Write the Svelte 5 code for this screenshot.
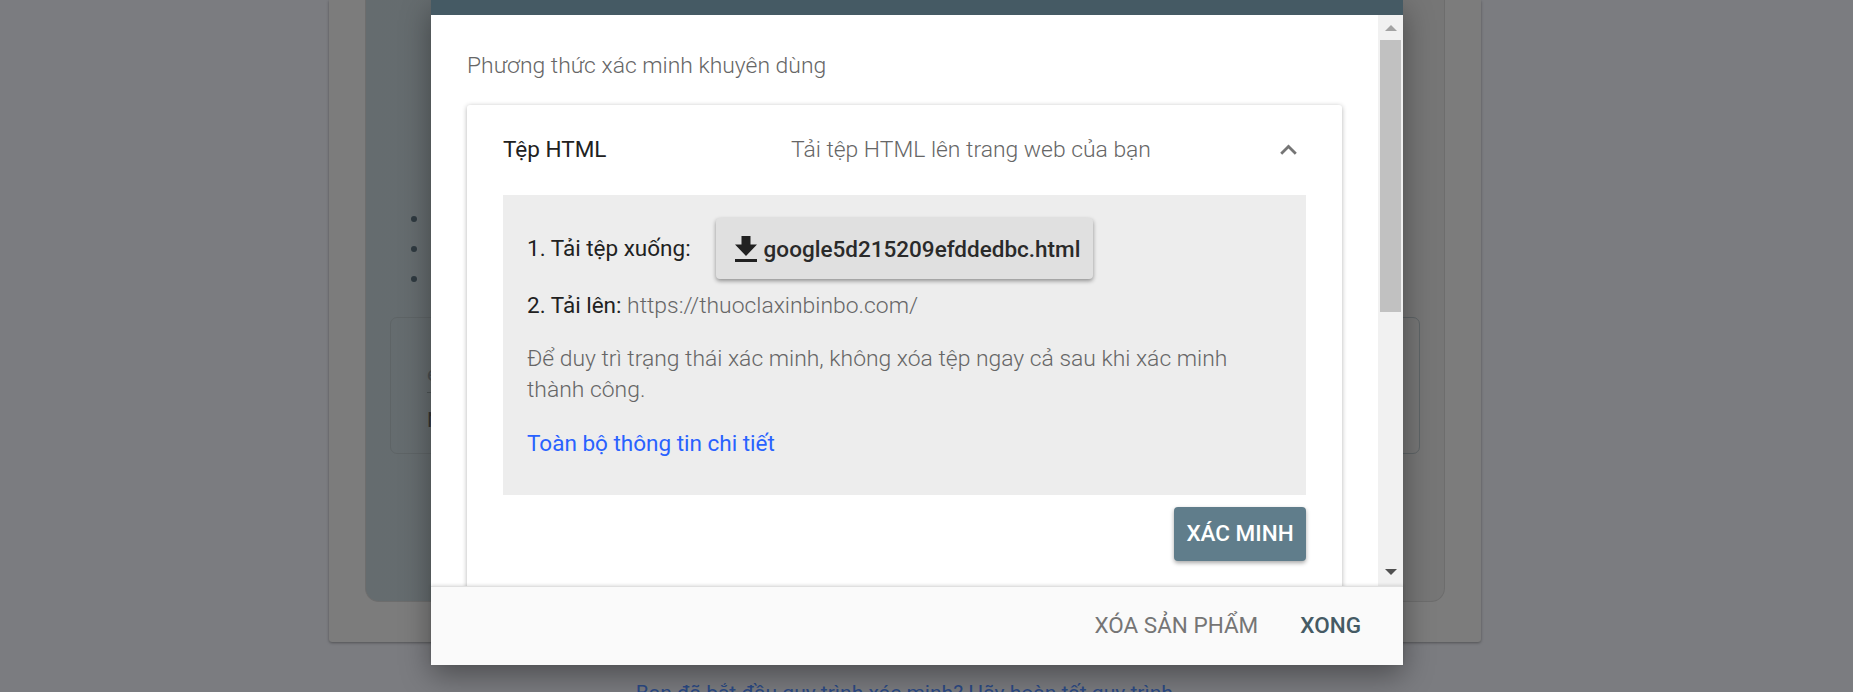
<script>
    const bullets = [0, 1, 2];
</script>

<div class="page">
    <div class="sheet">
        <div class="panel">
            <ul class="bullets">
                {#each bullets as b}
                    <li></li>
                {/each}
            </ul>
            <div class="owner-box">
                <div class="owner-top"><span>e</span></div>
                <div class="owner-bottom"><span>N</span></div>
            </div>
        </div>
    </div>
    <p class="resume">Bạn đã bắt đầu quy trình xác minh? Hãy hoàn tất quy trình.</p>
</div>

<div class="modal">
    <div class="modal-bar"></div>
    <div class="modal-body">
        <div class="scroll-content">
            <h2 class="section-title">Phương thức xác minh khuyên dùng</h2>
            <div class="method-card">
                <div class="method-head">
                    <span class="method-name">Tệp HTML</span>
                    <span class="method-desc">Tải tệp HTML lên trang web của bạn</span>
                    <svg class="chevron" viewBox="0 0 17 11" width="17" height="11">
                        <path d="M1.2 9.8 8.5 2.5l7.3 7.3" fill="none" stroke="#757575" stroke-width="2.8"/>
                    </svg>
                </div>
                <div class="steps">
                    <div class="step-one">
                        <span>1. Tải tệp xuống:</span>
                        <button class="file-btn">
                            <svg viewBox="0 0 22 26" width="22" height="26">
                                <path d="M6.5 0h9v8.5H22L11 20 0 8.5h6.5z M0 23h22v3H0z" fill="#212121"/>
                            </svg>
                            <span>google5d215209efddedbc.html</span>
                        </button>
                    </div>
                    <p class="step-two">2. Tải lên: <span class="url">https://thuoclaxinbinbo.com/</span></p>
                    <p class="note">Để duy trì trạng thái xác minh, không xóa tệp ngay cả sau khi xác minh thành công.</p>
                    <a class="details" href="#details">Toàn bộ thông tin chi tiết</a>
                </div>
                <div class="verify-row">
                    <button class="verify">XÁC MINH</button>
                </div>
            </div>
        </div>
        <div class="scrollbar">
            <span class="arrow up"></span>
            <div class="track"><div class="thumb"></div></div>
            <span class="arrow down"></span>
        </div>
    </div>
    <div class="modal-foot">
        <button class="foot-btn">XÓA SẢN PHẨM</button>
        <button class="foot-btn done">XONG</button>
    </div>
</div>

<style>
    :global(body) {
        margin: 0;
        background: #7b7c80;
        overflow: hidden;
        font-family: Roboto, "Liberation Sans", sans-serif;
    }

    .page {
        box-sizing: border-box;
        height: 692px;
        padding-right: 43px;
        overflow: hidden;
        display: flex;
        flex-direction: column;
        align-items: center;
    }

    .sheet {
        box-sizing: border-box;
        width: 1152px;
        height: 642px;
        padding: 0 36px 40px;
        background: #7c7c7c;
        border-radius: 0 0 3px 3px;
        box-shadow: 0 1px 3px rgba(0, 0, 0, 0.35);
        flex-shrink: 0;
    }

    .panel {
        box-sizing: border-box;
        height: 602px;
        padding: 207px 24px 0 24px;
        background: linear-gradient(90deg, #656c6f 0, #666c6e 20%, #767676 80%);
        border: 1px solid #6d6d6d;
        border-top: 0;
        border-radius: 0 0 14px 14px;
    }

    .bullets {
        box-sizing: border-box;
        margin: 0;
        padding: 9px 0 0 21px;
        height: 110px;
        display: flex;
        flex-direction: column;
        gap: 24px;
        list-style: none;
    }

    .bullets li {
        width: 6px;
        height: 6px;
        border-radius: 50%;
        background: #2f3a40;
    }

    .owner-box {
        box-sizing: border-box;
        height: 137px;
        border: 1px solid #5e6466;
        border-radius: 7px;
        padding: 0 36px;
        color: #333;
        font-size: 21px;
    }

    .owner-top {
        height: 75px;
        padding-top: 44px;
        box-sizing: border-box;
        line-height: 24px;
        color: #4a4f51;
        border-bottom: 1px solid #4f5557;
    }

    .owner-bottom {
        padding-top: 15px;
        line-height: 24px;
    }

    .resume {
        margin: 39px 0 0 4px;
        font-size: 21px;
        line-height: 24px;
        color: #2b4a85;
        white-space: nowrap;
    }

    .modal {
        position: absolute;
        left: 431px;
        top: 0;
        width: 972px;
        height: 665px;
        display: flex;
        flex-direction: column;
        background: #fff;
        box-shadow: 0 10px 28px rgba(0, 0, 0, 0.38);
    }

    .modal-bar {
        height: 15px;
        background: #455a64;
        flex-shrink: 0;
    }

    .modal-body {
        flex: 1;
        display: flex;
        min-height: 0;
    }

    .scroll-content {
        flex: 1;
        min-width: 0;
        overflow: hidden;
        padding: 0 36px;
    }

    .section-title {
        margin: 36px 0 0;
        font-size: 22.9px;
        font-weight: 300;
        line-height: 30px;
        color: #666;
    }

    .method-card {
        margin-top: 24px;
        height: 520px;
        background: #fff;
        border-radius: 3px;
        box-shadow: 0 1px 5px rgba(0, 0, 0, 0.3);
        padding: 0 36px;
    }

    .method-head {
        box-sizing: border-box;
        height: 90px;
        padding-bottom: 2px;
        display: flex;
        align-items: center;
        font-size: 22.5px;
    }

    .method-name {
        width: 288px;
        color: #212121;
    }

    .method-desc {
        flex: 1;
        font-size: 22.9px;
        font-weight: 300;
        color: #666;
    }

    .chevron {
        margin-right: 9px;
    }

    .steps {
        height: 300px;
        box-sizing: border-box;
        padding: 23px 24px 0;
        background: #ededed;
        font-size: 22.5px;
        line-height: 31px;
        color: #212121;
    }

    .step-one {
        display: flex;
        align-items: center;
        gap: 25px;
    }

    .file-btn {
        box-sizing: border-box;
        height: 61px;
        width: 377px;
        padding: 0 0 0 19px;
        display: flex;
        align-items: center;
        gap: 7px;
        border: 0;
        border-radius: 4px;
        background: #e0e0e0;
        box-shadow: 0 2px 4px rgba(0, 0, 0, 0.4);
        font: 500 22.5px Roboto, sans-serif;
        color: #2a2a2a;
        white-space: nowrap;
    }

    .file-btn svg {
        flex-shrink: 0;
    }

    .step-two {
        margin: 11px 0 0;
    }

    .url,
    .note {
        font-size: 22.9px;
        font-weight: 300;
        color: #666;
    }

    .note {
        margin: 23px 0 0;
        line-height: 30.5px;
    }

    .details {
        display: block;
        margin-top: 23px;
        color: #2962ff;
        text-decoration: none;
    }

    .verify-row {
        display: flex;
        justify-content: flex-end;
        margin-top: 12px;
    }

    .verify {
        width: 132px;
        height: 54px;
        padding: 0 0 2px;
        border: 0;
        border-radius: 4px;
        background: #607d8b;
        color: #fff;
        font: 500 22.5px Roboto, sans-serif;
        box-shadow: 0 2px 4px rgba(0, 0, 0, 0.35);
    }

    .scrollbar {
        width: 25px;
        flex-shrink: 0;
        display: flex;
        flex-direction: column;
        align-items: center;
        background: #f1f1f1;
    }

    .track {
        flex: 1;
        width: 21px;
        margin: 9px 0 0;
    }

    .thumb {
        height: 272px;
        background: #c1c1c1;
    }

    .arrow {
        width: 0;
        height: 0;
        border-left: 6px solid transparent;
        border-right: 6px solid transparent;
    }

    .arrow.up {
        margin-top: 10px;
        border-bottom: 6px solid #a3a3a3;
    }

    .arrow.down {
        margin-bottom: 11px;
        border-top: 6px solid #505050;
    }

    .modal-foot {
        height: 79px;
        flex-shrink: 0;
        box-sizing: border-box;
        display: flex;
        justify-content: flex-end;
        align-items: center;
        gap: 42px;
        padding: 0 42px 2px 0;
        background: #fafafa;
        border-top: 1px solid #e0e0e0;
        box-shadow: 0 -1px 3px rgba(0, 0, 0, 0.12);
        position: relative;
    }

    .foot-btn {
        padding: 0;
        border: 0;
        background: none;
        font: 400 22.5px Roboto, sans-serif;
        color: #757575;
    }

    .foot-btn.done {
        font-weight: 500;
        color: #455a64;
    }
</style>
